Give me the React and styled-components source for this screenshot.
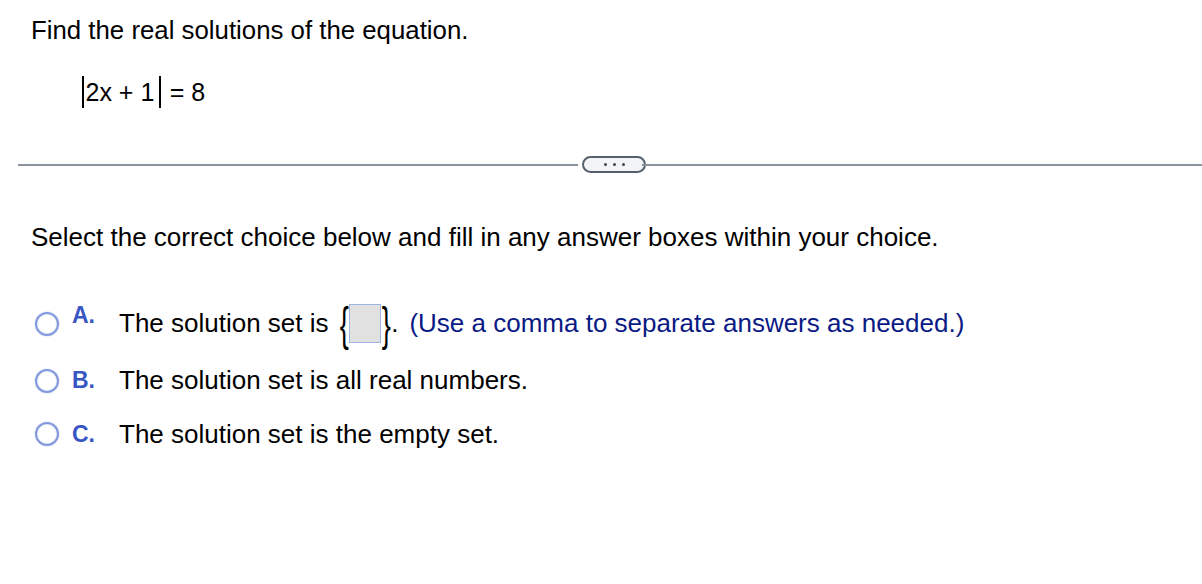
import React from "react";
import styled, { createGlobalStyle } from "styled-components";

const GlobalStyle = createGlobalStyle`
  html, body {
    margin: 0;
    padding: 0;
    background: #ffffff;
  }
  body {
    font-family: "Liberation Sans", Arial, Helvetica, sans-serif;
    color: #000;
  }
`;

const Page = styled.div`
  width: 1202px;
  height: 584px;
  display: flex;
  flex-direction: column;
  padding-top: 15px;
  box-sizing: border-box;
`;

const Prompt = styled.p`
  margin: 0 0 0 31px;
  font-size: 25.8px;
  line-height: 30px;
`;

const Equation = styled.div`
  margin: 31px 0 0 82px;
  display: flex;
  align-items: center;
  font-size: 25px;
  height: 32px;
`;

const AbsBar = styled.span`
  display: inline-block;
  width: 1.5px;
  height: 32px;
  background: #000;
  margin: ${(p) => (p.$left ? "0 2px 0 0" : "0 2px 0 5px")};
`;

const Divider = styled.div`
  margin: 48px 0 0 18px;
  display: flex;
  align-items: center;
`;

const Rule = styled.div`
  flex: 1;
  height: 2px;
  background: #8a929e;
`;

const MoreButton = styled.div`
  width: 60px;
  height: 13px;
  border: 2px solid #55606c;
  border-radius: 9px;
  background: #f3f4f6;
  display: flex;
  align-items: center;
  justify-content: center;
  gap: 6px;
  margin-left: 4px;
  margin-right: -4px;
`;

const Dot = styled.span`
  width: 3px;
  height: 3px;
  border-radius: 50%;
  background: #3c4650;
`;

const Instruction = styled.p`
  margin: 49px 0 0 31px;
  font-size: 26px;
  line-height: 30px;
`;

const Choices = styled.div`
  margin: 42px 0 0 35px;
  display: flex;
  flex-direction: column;
`;

const Choice = styled.div`
  display: flex;
  align-items: center;
  height: ${(p) => p.$height}px;
`;

const Radio = styled.span`
  width: 20px;
  height: 20px;
  border-radius: 50%;
  border: 2px solid #8199dc;
  box-shadow: 0 0 1.5px #b3c1ea, inset 0 0 1.5px #b3c1ea;
  flex-shrink: 0;
`;

const Letter = styled.span`
  font-weight: bold;
  color: #3856c2;
  font-size: 23px;
  width: 47px;
  margin-left: 13px;
  position: relative;
  top: ${(p) => p.$raise || 0}px;
`;

const ChoiceText = styled.span`
  font-size: 26px;
  display: flex;
  align-items: center;
`;

const Brace = styled.span`
  display: inline-block;
  font-size: 32px;
  line-height: 32px;
  transform: scale(0.85, 1.42);
  margin: ${(p) => (p.$open ? "0 0 0 3px" : "0 -1px 0 0")};
`;

const AnswerBox = styled.span`
  display: inline-block;
  width: 30px;
  height: 37px;
  background: #e1e1e1;
  border: 1px solid #9fb4e6;
`;

const Hint = styled.span`
  color: #0a1a85;
  margin-left: 11px;
`;

export default function App() {
  return (
    <>
      <GlobalStyle />
      <Page>
        <Prompt>Find the real solutions of the equation.</Prompt>
        <Equation>
          <AbsBar $left />
          <span>2x + 1</span>
          <AbsBar />
          <span>&nbsp;= 8</span>
        </Equation>
        <Divider>
          <Rule />
          <MoreButton>
            <Dot />
            <Dot />
            <Dot />
          </MoreButton>
          <Rule />
        </Divider>
        <Instruction>
          Select the correct choice below and fill in any answer boxes within your choice.
        </Instruction>
        <Choices>
          <Choice $height={59}>
            <Radio />
            <Letter $raise={-8}>A.</Letter>
            <ChoiceText>
              The solution set is&nbsp;
              <Brace $open>{"{"}</Brace>
              <AnswerBox />
              <Brace>{"}"}</Brace>
              .
              <Hint>(Use a comma to separate answers as needed.)</Hint>
            </ChoiceText>
          </Choice>
          <Choice $height={55}>
            <Radio />
            <Letter>B.</Letter>
            <ChoiceText>The solution set is all real numbers.</ChoiceText>
          </Choice>
          <Choice $height={52}>
            <Radio />
            <Letter>C.</Letter>
            <ChoiceText>The solution set is the empty set.</ChoiceText>
          </Choice>
        </Choices>
      </Page>
    </>
  );
}
